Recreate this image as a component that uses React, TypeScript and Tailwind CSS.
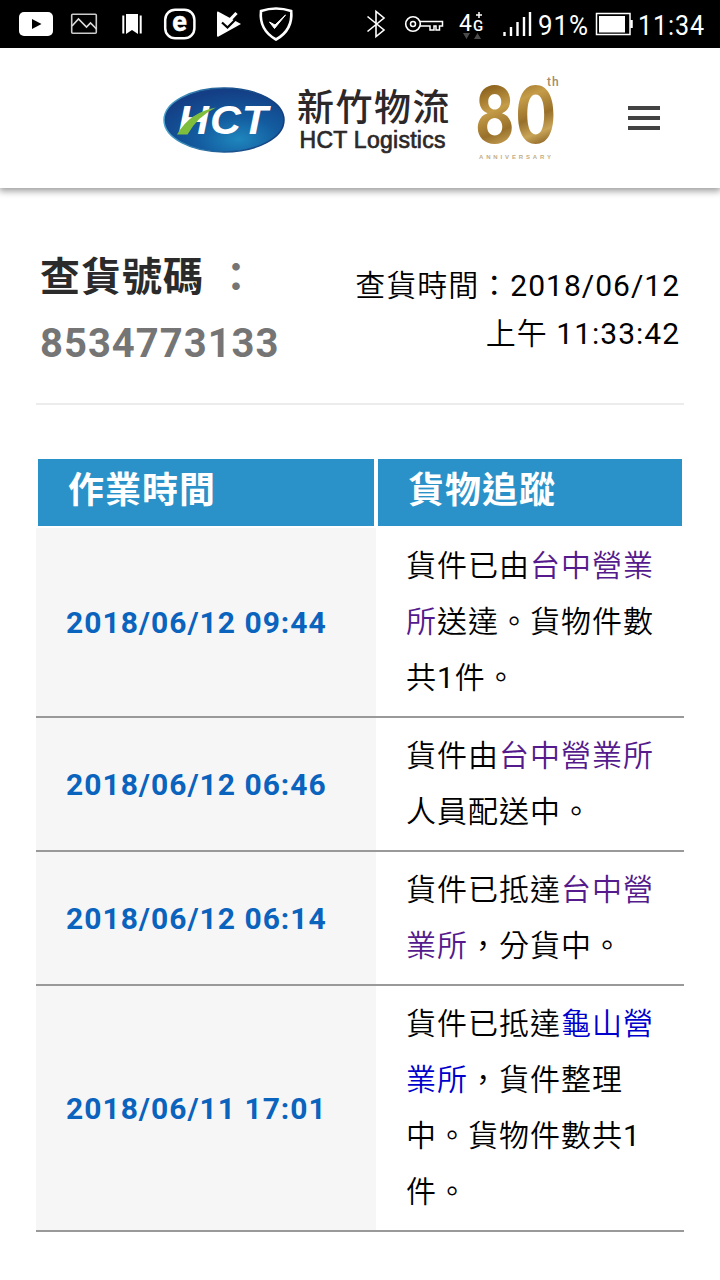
import type { ReactNode } from 'react';

type Part = { text: string; link?: 'visited' | 'new' };

const TRACKING_NO = '8534773133';

const RECORDS: { time: string; lines: Part[][] }[] = [
  {
    time: '2018/06/12 09:44',
    lines: [
      [{ text: '貨件已由' }, { text: '台中營業', link: 'visited' }],
      [{ text: '所', link: 'visited' }, { text: '送達。貨物件數' }],
      [{ text: '共1件。' }],
    ],
  },
  {
    time: '2018/06/12 06:46',
    lines: [
      [{ text: '貨件由' }, { text: '台中營業所', link: 'visited' }],
      [{ text: '人員配送中。' }],
    ],
  },
  {
    time: '2018/06/12 06:14',
    lines: [
      [{ text: '貨件已抵達' }, { text: '台中營', link: 'visited' }],
      [{ text: '業所', link: 'visited' }, { text: '，分貨中。' }],
    ],
  },
  {
    time: '2018/06/11 17:01',
    lines: [
      [{ text: '貨件已抵達' }, { text: '龜山營', link: 'new' }],
      [{ text: '業所', link: 'new' }, { text: '，貨件整理' }],
      [{ text: '中。貨物件數共1' }],
      [{ text: '件。' }],
    ],
  },
];

function StatusBar() {
  return (
    <div className="h-12 bg-black text-white">
      <svg width="720" height="48" viewBox="0 0 720 48" fill="none" stroke="#fff">
        {/* video */}
        <rect x="19" y="12" width="34" height="24" rx="5" fill="#fff" stroke="none" />
        <path d="M32 19v10l9.500-5z" fill="#000" stroke="none" />
        {/* picture */}
        <rect x="71.700" y="14.200" width="24.600" height="19" rx="1" stroke="#ccc" strokeWidth="1.600" />
        <path d="M72 26l6.500-7 8 8 4-4 6 6" stroke="#ddd" strokeWidth="1.600" />
        {/* bookmarks */}
        <path d="M126 14h12v20l-6-4-6 4z" fill="#fff" stroke="none" />
        <path d="M123.300 15.500v18M140.700 15.500v18" strokeWidth="2" />
        {/* eset */}
        <rect x="165.200" y="9.700" width="29.200" height="28.600" rx="10" strokeWidth="2.500" />
        <text x="172.300" y="31" fontSize="27" fontWeight="700" fill="#fff" stroke="#fff" strokeWidth="0.500" fontFamily="Roboto, sans-serif">e</text>
        {/* play protect */}
        <path d="M217 12.500q0-1.500 1.500-.8L241 24 218.500 36.500q-1.500.7-1.500-1z" fill="#fff" stroke="none" />
        <path d="M222 22.500l5.500 5 11-11" stroke="#000" strokeWidth="2.200" />
        <path d="M226.500 23.500L236.500 13" strokeWidth="3.200" />
        {/* shield */}
        <path d="M261 11Q276 6 291.200 11Q293 30 276 39.500Q259 30 261 11Z" strokeWidth="2.600" />
        <path d="M269.500 22l5 6.500 11-13.500L275 25z" fill="#fff" strokeWidth="1" />
        {/* bluetooth */}
        <path d="M367.500 16.500L384 30l-8 6.500v-25l8 6.500-16.500 13.500" strokeWidth="1.600" />
        {/* vpn key */}
        <circle cx="413" cy="24" r="7.300" strokeWidth="1.600" />
        <circle cx="413" cy="24" r="2.500" strokeWidth="1.500" />
        <path d="M420 21.500h22.500v4.500h-3v4h-3.500v-4h-2v4H430v-4h-10" strokeWidth="1.500" />
        {/* 4G+ */}
        <g fill="#fff" stroke="none" fontFamily="Roboto, sans-serif">
          <text x="459" y="30.500" fontSize="23">4</text>
          <text x="473" y="30.500" fontSize="15" fontWeight="500">G</text>
        </g>
        <path d="M479 12v6M476 15h6" strokeWidth="1.500" />
        <path d="M463 33h7l-3.500 6zM474 39h7l-3.500-6z" fill="#4a4a4a" stroke="none" />
        {/* signal */}
        <path d="M504.500 36v-4M511 36v-9M517.500 36V22M524 36V17M530 36V12" strokeWidth="2.400" />
        <g fill="#fff" stroke="none" fontFamily="Roboto, sans-serif" fontSize="28">
          <text x="538" y="34.500" textLength="51" lengthAdjust="spacingAndGlyphs">91%</text>
          <text x="638" y="34.500" textLength="67" lengthAdjust="spacingAndGlyphs">11:34</text>
        </g>
        {/* battery */}
        <rect x="596.500" y="13.500" width="33.500" height="21" strokeWidth="1.500" />
        <rect x="599" y="16" width="26" height="16.500" fill="#fff" stroke="none" />
        <path d="M631.500 20v8" strokeWidth="2.500" />
      </svg>
    </div>
  );
}

function HctLogo() {
  return (
    <svg width="122" height="68" viewBox="0 0 122 68">
      <defs>
        <radialGradient id="oval" cx="0.620" cy="0.800" r="0.750">
          <stop offset="0" stopColor="#1f86bd" />
          <stop offset="0.450" stopColor="#135c9f" />
          <stop offset="1" stopColor="#143f86" />
        </radialGradient>
        <linearGradient id="rim" x1="0" x2="1">
          <stop offset="0" stopColor="#4ba3cb" />
          <stop offset="0.500" stopColor="#1b5791" />
          <stop offset="1" stopColor="#123d7e" />
        </linearGradient>
      </defs>
      <ellipse cx="61" cy="34" rx="60" ry="32" fill="url(#oval)" stroke="url(#rim)" strokeWidth="1.500" />
      <text
        x="15"
        y="48"
        fontFamily="'Liberation Sans', sans-serif"
        fontWeight="700"
        fontStyle="italic"
        fontSize="41"
        fill="#fff"
        textLength="91"
        lengthAdjust="spacingAndGlyphs"
      >
        HCT
      </text>
      <path d="M14 48.500Q27 26 53 21.500Q35 30 24.500 48.500Z" fill="#7fbd3c" />
    </svg>
  );
}

function AnniversaryMark() {
  return (
    <svg width="92" height="120" viewBox="0 -24 92 120">
      <defs>
        <linearGradient id="gold" x1="0" y1="0" x2="0.350" y2="1">
          <stop offset="0" stopColor="#c9a04c" />
          <stop offset="0.250" stopColor="#8f6520" />
          <stop offset="0.480" stopColor="#c59c48" />
          <stop offset="0.700" stopColor="#98702a" />
          <stop offset="0.860" stopColor="#c8a458" />
          <stop offset="1" stopColor="#8a6222" />
        </linearGradient>
      </defs>
      <text
        x="0"
        y="65.500"
        fontFamily="Inter, sans-serif"
        fontWeight="700"
        fontSize="78"
        fill="url(#gold)"
        textLength="82"
        lengthAdjust="spacingAndGlyphs"
      >
        80
      </text>
      <text x="72" y="8.500" fontFamily="Roboto, sans-serif" fontSize="12" fontWeight="500" fill="#a88b66">th</text>
      <text
        x="4"
        y="81.500"
        fontFamily="'Liberation Sans', sans-serif"
        fontSize="6"
        fontWeight="700"
        fill="#c3ad85"
        textLength="73"
      >
        ANNIVERSARY
      </text>
    </svg>
  );
}

function Header() {
  return (
    <header className="flex h-[140px] items-start bg-white pt-[38px] pl-[163px] shadow-[0_2px_7px_1px_rgba(0,0,0,0.4)]">
      <HctLogo />
      <div className="ml-3 w-[154px] shrink-0 text-[#2c2829]">
        <div className="-mt-[3px] h-11 font-['Noto_Sans_CJK_TC',sans-serif] text-[37px] leading-[44px] font-medium tracking-[1.500px] whitespace-nowrap">
          新竹物流
        </div>
        <svg width="154" height="28" viewBox="0 0 154 28">
          <text
            x="2.500"
            y="20.500"
            fontFamily="'Liberation Sans', sans-serif"
            fontSize="23"
            fill="#2c2829"
            stroke="#2c2829"
            strokeWidth="0.700"
            textLength="147"
          >
            HCT Logistics
          </text>
        </svg>
      </div>
      <div className="-mt-[33px] ml-6 shrink-0">
        <AnniversaryMark />
      </div>
      <button className="mt-5 ml-[61px] flex w-8 flex-col gap-1.5" aria-label="menu">
        <span className="h-1 w-full bg-[#424242]" />
        <span className="h-1 w-full bg-[#424242]" />
        <span className="h-1 w-full bg-[#424242]" />
      </button>
    </header>
  );
}

function PartText({ part }: { part: Part }) {
  if (part.link === 'visited') return <a className="text-[#551a8b]">{part.text}</a>;
  if (part.link === 'new') return <a className="text-[#0000cc]">{part.text}</a>;
  return <>{part.text}</>;
}

function HeadCell({ children }: { children: ReactNode }) {
  return (
    <th className="h-[71px] border-2 border-white bg-[#2a92c8] px-[30px] pb-1 text-left font-[Roboto,'Noto_Sans_CJK_TC',sans-serif] text-[36px] leading-[56px] font-bold text-white">
      {children}
    </th>
  );
}

export default function App() {
  return (
    <div
      lang="zh-Hant"
      className="h-[1280px] w-[720px] overflow-hidden bg-white font-[Roboto,'Noto_Sans_CJK_TC_DemiLight','Noto_Sans_CJK_TC',sans-serif] text-[30px] tracking-[1px] text-black"
    >
      <StatusBar />
      <Header />

      <main className="px-9">
        <div className="flex h-[217px] justify-between border-b-2 border-[#ececec] pt-[57px] pr-1 pl-1">
          <div className="font-[Roboto,'Noto_Sans_CJK_TC',sans-serif] text-[40px] leading-[66px] font-bold text-[#757575]">
            <div className="flex">
              <span className="text-[#2b2b2b]">查貨號碼</span>
              <span className="ml-3">：</span>
            </div>
            <div>{TRACKING_NO}</div>
          </div>
          <div className="pt-[17px] text-right leading-[48px]">
            <div>查貨時間：2018/06/12</div>
            <div>上午 11:33:42</div>
          </div>
        </div>

        <table className="mt-[52px] w-full table-fixed border-separate border-spacing-0">
          <colgroup>
            <col className="w-[340px]" />
            <col />
          </colgroup>
          <thead>
            <tr>
              <HeadCell>作業時間</HeadCell>
              <HeadCell>貨物追蹤</HeadCell>
            </tr>
          </thead>
          <tbody>
            {RECORDS.map((record) => (
              <tr key={record.time}>
                <td className="border-b-2 border-[#999] bg-[#f6f6f6] px-[30px] font-bold text-[#0a63bd]">
                  {record.time}
                </td>
                <td className="border-b-2 border-[#999] py-2.5 pl-[30px] leading-[56px] whitespace-nowrap">
                  {record.lines.map((line, i) => (
                    <div key={i}>
                      {line.map((part) => (
                        <PartText key={part.text} part={part} />
                      ))}
                    </div>
                  ))}
                </td>
              </tr>
            ))}
          </tbody>
        </table>
      </main>
    </div>
  );
}
